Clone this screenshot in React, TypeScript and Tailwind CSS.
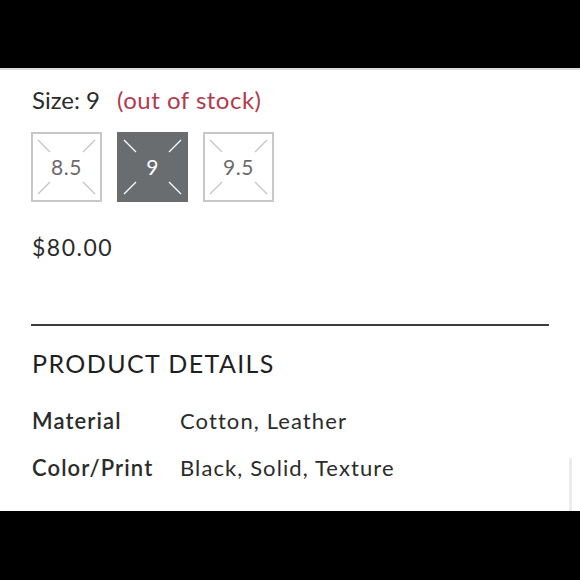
import React from "react";

const SIZES = [
  { label: "8.5", selected: false },
  { label: "9", selected: true },
  { label: "9.5", selected: false },
];

function SizeBox({ label, selected }: { label: string; selected: boolean }) {
  const stroke = selected ? "#ffffff" : "#c4c4c4";
  return (
    <div
      className={
        selected
          ? "relative flex h-[70px] w-[71px] items-center justify-center border-2 border-[#6a6d70] bg-[#6a6d70] text-[21px] tracking-[0.5px] text-white"
          : "relative flex h-[70px] w-[71px] items-center justify-center border-2 border-[#c8c8c8] bg-white text-[21px] tracking-[0.5px] text-[#6b6b6b]"
      }
    >
      <svg className="absolute inset-0" width="67" height="66" viewBox="0 0 67 66">
        <line x1="5" y1="6" x2="17" y2="18" stroke={stroke} strokeWidth="1.3" />
        <line x1="62" y1="6" x2="50" y2="18" stroke={stroke} strokeWidth="1.3" />
        <line x1="5" y1="60" x2="17" y2="48" stroke={stroke} strokeWidth="1.3" />
        <line x1="62" y1="60" x2="50" y2="48" stroke={stroke} strokeWidth="1.3" />
      </svg>
      <span className="relative">{label}</span>
    </div>
  );
}

export default function App() {
  return (
    <div className="flex h-[580px] w-[580px] flex-col bg-black font-['Lato',sans-serif]">
      <div className="h-[68px] bg-black" />
      <div className="h-[2px] bg-[#dcdcdc]" />
      <div className="relative flex-1 bg-white px-[31px]">
        {/* size selector */}
        <div className="mt-[15px] flex items-baseline text-[24px] leading-[30px]">
          <span className="ml-[1px] text-[#2b2b2b]">Size: 9</span>
          <span className="ml-[17px] tracking-[0.5px] text-[#b23a4e]">(out of stock)</span>
        </div>
        <div className="mt-[17px] flex gap-[15px]">
          {SIZES.map((s) => (
            <SizeBox key={s.label} label={s.label} selected={s.selected} />
          ))}
        </div>

        <div className="mt-[30px] ml-[1px] text-[23px] leading-[30px] tracking-[1.5px] text-[#2b2b2b]">$80.00</div>

        <div className="mt-[62px] h-[2px] w-[518px] bg-[#3b3b45]" />

        {/* product details */}
        <h2 className="mt-[21px] ml-[1px] text-[25px] leading-[32px] tracking-[1.4px] text-[#1f1f1f]">PRODUCT DETAILS</h2>
        <div className="mt-[27px] ml-[1px] grid grid-cols-[148px_1fr] gap-y-[17px] text-[22px] leading-[30px] tracking-[1.1px]">
          <div className="font-semibold text-[#2b2b2b]">Material</div>
          <div className="text-[#2b2b2b]">Cotton, Leather</div>
          <div className="font-semibold text-[#2b2b2b]">Color/Print</div>
          <div className="text-[#2b2b2b]">Black, Solid, Texture</div>
        </div>

        {/* scrollbar */}
        <div className="absolute bottom-0 right-[8px] h-[53px] w-[3px] bg-[#ececec]" />
      </div>
      <div className="h-[69px] bg-black" />
    </div>
  );
}
